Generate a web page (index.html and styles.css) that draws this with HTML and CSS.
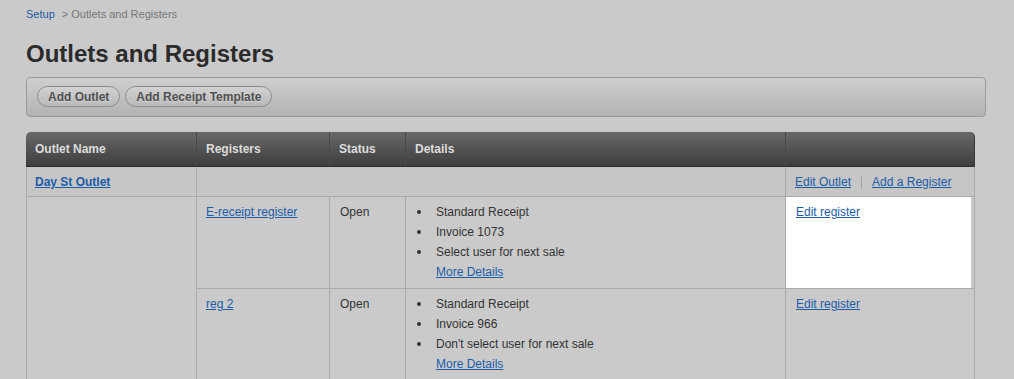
FILE: index.html
```html
<!DOCTYPE html>
<html lang="en">
<head>
    <meta charset="UTF-8">
    <title>Outlets and Registers</title>
    <link rel="stylesheet" href="styles.css">
</head>
<body>
    <div class="breadcrumb">
        <a href="#">Setup</a> <span>&gt; Outlets and Registers</span>
    </div>

    <h1>Outlets and Registers</h1>

    <div class="toolbar">
        <button>Add Outlet</button>
        <button>Add Receipt Template</button>
    </div>

    <table class="outlets">
        <colgroup>
            <col style="width: 171px">
            <col style="width: 133px">
            <col style="width: 76px">
            <col style="width: 380px">
            <col style="width: 189px">
        </colgroup>
        <thead>
            <tr>
                <th class="first">Outlet Name</th>
                <th>Registers</th>
                <th>Status</th>
                <th>Details</th>
                <th class="last"></th>
            </tr>
        </thead>
        <tbody>
            <tr class="outlet-row">
                <td class="first"><a href="#" class="outlet-name">Day St Outlet</a></td>
                <td colspan="3"></td>
                <td class="actions">
                    <a href="#">Edit Outlet</a><span class="sep"></span><a href="#">Add a Register</a>
                </td>
            </tr>
            <tr>
                <td class="first" rowspan="2"></td>
                <td class="register"><a href="#">E-receipt register</a></td>
                <td>Open</td>
                <td>
                    <ul class="details">
                        <li>Standard Receipt</li>
                        <li>Invoice 1073</li>
                        <li>Select user for next sale</li>
                    </ul>
                    <a href="#" class="more">More Details</a>
                </td>
                <td class="highlight"><a href="#">Edit register</a></td>
            </tr>
            <tr>
                <td class="register"><a href="#">reg 2</a></td>
                <td>Open</td>
                <td>
                    <ul class="details">
                        <li>Standard Receipt</li>
                        <li>Invoice 966</li>
                        <li>Don't select user for next sale</li>
                    </ul>
                    <a href="#" class="more">More Details</a>
                </td>
                <td><a href="#">Edit register</a></td>
            </tr>
        </tbody>
    </table>
</body>
</html>
```

FILE: styles.css
```css
body {
    font-family: "Liberation Sans", Arial, Helvetica, sans-serif;
    font-size: 12px;
    color: #333;
    margin: 0;
    padding: 7px 26px;
    background-color: #cacaca;
}
a {
    color: #1d5ca6;
}
.breadcrumb {
    font-size: 11px;
    line-height: 14px;
}
.breadcrumb a {
    text-decoration: none;
    margin-right: 4px;
}
.breadcrumb span {
    color: #777;
}
h1 {
    font-size: 24px;
    line-height: 28px;
    margin: 19px 0 9px;
    color: #2b2b2b;
}
.toolbar {
    width: 960px;
    box-sizing: border-box;
    padding: 8px 10px 9px;
    border: 1px solid #9a9a9a;
    border-radius: 4px;
    background: linear-gradient(#cfcfcf, #b3b3b3);
    display: flex;
    gap: 5px;
}
.toolbar button {
    font-family: inherit;
    font-size: 12px;
    font-weight: bold;
    color: #505050;
    height: 21px;
    padding: 0 10px;
    border: 1px solid #8c8c8c;
    border-radius: 11px;
    background: linear-gradient(#d2d2d2, #b9b9b9);
    text-shadow: 0 1px 0 rgba(255, 255, 255, 0.3);
    cursor: pointer;
}
.outlets {
    margin-top: 15px;
    width: 949px;
    table-layout: fixed;
    border-collapse: separate;
    border-spacing: 0;
}
.outlets th,
.outlets td {
    box-sizing: border-box;
    text-align: left;
    vertical-align: top;
    line-height: 20px;
    padding: 5px 10px 6px;
    border-right: 1px solid #aaa;
    border-bottom: 1px solid #aaa;
}
.outlets th {
    height: 34px;
    padding: 7px 9px;
    color: #dcdcdc;
    font-weight: bold;
    background: linear-gradient(#686868, #3e3e3e);
    border-right: 1px solid #4a4a4a;
    border-bottom: 1px solid #2c2c2c;
}
.outlets th.first {
    border-top-left-radius: 5px;
}
.outlets th.last {
    border-top-right-radius: 5px;
    border-right: 1px solid #3a3a3a;
}
.outlets td.first {
    border-left: 1px solid #aaa;
    padding-left: 8px;
}
.outlets td.register {
    padding-left: 9px;
}
.outlets .outlet-row td {
    height: 30px;
    padding-top: 5px;
    padding-bottom: 4px;
    background-color: #c6c6c6;
}
.outlet-name {
    font-weight: bold;
}
.outlets td.actions {
    padding-left: 9px;
}
.sep {
    display: inline-block;
    width: 1px;
    height: 14px;
    margin: 0 10px;
    vertical-align: -3px;
    background-color: #a4a4a4;
}
.highlight {
    background-color: #fff;
    box-shadow: inset -3px 0 0 #cacaca;
}
.details {
    margin: 0;
    padding: 0;
    list-style: none;
}
.details li {
    display: flex;
    align-items: center;
}
.details li::before {
    content: "";
    width: 4px;
    height: 4px;
    margin: 0 15px 0 1px;
    border-radius: 50%;
    background-color: #333;
}
.more {
    margin-left: 20px;
}
```
